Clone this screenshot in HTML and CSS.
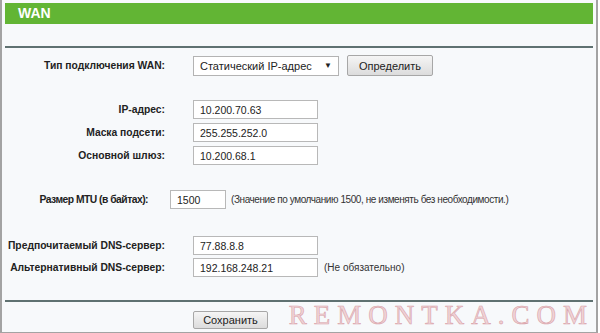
FILE: index.html
```html
<!DOCTYPE html>
<html lang="ru">
<head>
    <meta charset="UTF-8">
    <title>WAN</title>
    <link rel="stylesheet" href="styles.css">
</head>
<body>
    <div class="frame">
        <div class="title">WAN</div>
        <div class="rule"></div>

        <div class="row row-type">
            <span class="lbl">Тип подключения WAN:</span>
            <div class="ctl">
                <div class="select"><span>Статический IP-адрес</span><span class="arrow">▼</span></div>
                <button class="btn btn-detect">Определить</button>
            </div>
        </div>

        <div class="group group-ip">
            <div class="row">
                <span class="lbl">IP-адрес:</span>
                <div class="ctl"><input class="field" type="text" value="10.200.70.63"></div>
            </div>
            <div class="row">
                <span class="lbl">Маска подсети:</span>
                <div class="ctl"><input class="field" type="text" value="255.255.252.0"></div>
            </div>
            <div class="row">
                <span class="lbl">Основной шлюз:</span>
                <div class="ctl"><input class="field" type="text" value="10.200.68.1"></div>
            </div>
        </div>

        <div class="row row-mtu">
            <span class="lbl">Размер MTU (в байтах):</span>
            <div class="ctl">
                <input class="field field-short" type="text" value="1500">
                <span class="hint">(Значение по умолчанию 1500, не изменять без необходимости.)</span>
            </div>
        </div>

        <div class="group group-dns">
            <div class="row">
                <span class="lbl">Предпочитаемый DNS-сервер:</span>
                <div class="ctl"><input class="field" type="text" value="77.88.8.8"></div>
            </div>
            <div class="row">
                <span class="lbl">Альтернативный DNS-сервер:</span>
                <div class="ctl">
                    <input class="field" type="text" value="192.168.248.21">
                    <span class="hint hint-opt">(Не обязательно)</span>
                </div>
            </div>
        </div>

        <div class="rule rule-bottom"></div>

        <div class="row row-save">
            <span></span>
            <div class="ctl"><button class="btn btn-save">Сохранить</button></div>
        </div>

        <div class="watermark">REMONTKA.COM</div>
    </div>
</body>
</html>
```

FILE: styles.css
```css
body {
    margin: 0;
    background: #ffffff;
    font-family: "Liberation Sans", Arial, sans-serif;
    color: #222;
}

.frame {
    position: relative;
    width: 588px;
    height: 329px;
    padding: 3px 3px 0 3px;
    background: #f7f9fb;
    border-left: 2px solid #a3a3a3;
    border-right: 2px solid #a3a3a3;
    border-bottom: 2px solid #a3a3a3;
    overflow: hidden;
}

.title {
    height: 21px;
    line-height: 21px;
    background: #62b534;
    color: #fff;
    font-weight: bold;
    font-size: 14px;
    padding-left: 13px;
}

.rule {
    height: 2px;
    margin-top: 22px;
    background: #5f7171;
}

.row {
    display: grid;
    grid-template-columns: 160px 1fr;
    column-gap: 28px;
    align-items: center;
}

.lbl {
    text-align: right;
    font-weight: bold;
    font-size: 10.3px;
    white-space: nowrap;
}

.ctl {
    display: flex;
    align-items: center;
}

.row-type {
    margin-top: 7px;
}

.select {
    width: 132px;
    height: 18px;
    padding: 0 6px 0 6px;
    display: flex;
    align-items: center;
    justify-content: space-between;
    background: #fff;
    border: 1px solid #b3b3b3;
    font-size: 11px;
    color: #222;
}

.arrow {
    font-size: 8px;
}

.btn {
    font-family: "Liberation Sans", Arial, sans-serif;
    font-size: 11px;
    color: #222;
    background: linear-gradient(#f5f5f5, #dcdcdc);
    border: 1px solid #a7a7a7;
    border-radius: 2px;
    padding: 0;
}

.btn-detect {
    width: 86px;
    height: 21px;
    margin-left: 8px;
}

.group-ip {
    margin-top: 24px;
    display: flex;
    flex-direction: column;
    gap: 4px;
}

.field {
    box-sizing: border-box;
    width: 125px;
    height: 19px;
    padding: 0 0 0 6px;
    border: 1px solid #b8b8b8;
    background: #fff;
    font-family: "Liberation Sans", Arial, sans-serif;
    font-size: 10.5px;
    color: #222;
}

.field-short {
    width: 56px;
}

.row-mtu {
    margin-top: 25px;
    grid-template-columns: 143px 1fr;
    column-gap: 22px;
}

.row-mtu .lbl {
    letter-spacing: -0.5px;
}

.hint {
    margin-left: 5px;
    font-size: 10px;
    letter-spacing: -0.42px;
    color: #333;
    white-space: nowrap;
}

.hint-opt {
    margin-left: 6px;
    letter-spacing: 0;
}

.group-dns {
    margin-top: 27px;
    display: flex;
    flex-direction: column;
    gap: 3px;
}

.rule-bottom {
    margin-top: 23px;
}

.row-save {
    margin-top: 9px;
}

.btn-save {
    width: 75px;
    height: 18px;
}

.watermark {
    position: absolute;
    right: 2px;
    bottom: 1px;
    font-family: "Liberation Serif", "Times New Roman", serif;
    font-size: 27px;
    letter-spacing: 7px;
    color: #f0d3d6;
    -webkit-text-stroke: 0.6px #d9a3aa;
}
```
